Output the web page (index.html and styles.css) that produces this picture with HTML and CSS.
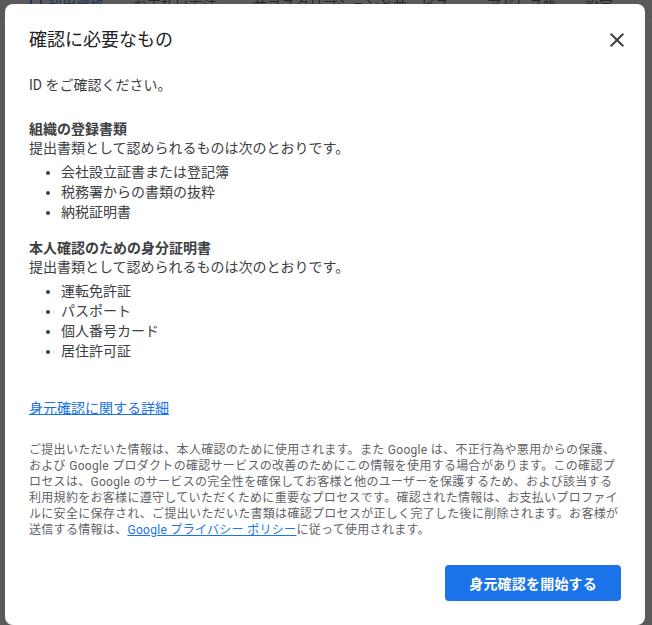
FILE: index.html
```html
<!DOCTYPE html>
<html lang="ja">
<head>
<meta charset="utf-8">
<link rel="stylesheet" href="styles.css">
</head>
<body>
<div class="page">
  <nav class="tabs">
    <span class="tab tab-active"><span class="tab-icon"></span>利用資格</span>
    <span class="tab tab-2">お支払い方法</span>
    <span class="tab tab-3">サブスクリプションとサービス</span>
    <span class="tab tab-4">アドレス帳</span>
    <span class="tab tab-5">設定</span>
  </nav>
</div>
<div class="overlay">
  <div class="dialog" role="dialog">
    <div class="dialog-header">
      <h1 class="dialog-title">確認に必要なもの</h1>
      <button class="close" aria-label="閉じる">
        <svg width="24" height="24" viewBox="0 0 24 24"><path d="M19 6.41L17.59 5 12 10.59 6.41 5 5 6.41 10.59 12 5 17.59 6.41 19 12 13.41 17.59 19 19 17.59 13.41 12z" fill="#3c4043"/></svg>
      </button>
    </div>
    <p class="intro">ID をご確認ください。</p>
    <section class="section first">
      <h2 class="section-title">組織の登録書類</h2>
      <p class="section-desc">提出書類として認められるものは次のとおりです。</p>
      <ul class="doc-list">
        <li>会社設立証書または登記簿</li>
        <li>税務署からの書類の抜粋</li>
        <li>納税証明書</li>
      </ul>
    </section>
    <section class="section">
      <h2 class="section-title">本人確認のための身分証明書</h2>
      <p class="section-desc">提出書類として認められるものは次のとおりです。</p>
      <ul class="doc-list">
        <li>運転免許証</li>
        <li>パスポート</li>
        <li>個人番号カード</li>
        <li>居住許可証</li>
      </ul>
    </section>
    <a class="details-link" href="#">身元確認に関する詳細</a>
    <p class="fine-print">ご提出いただいた情報は、本人確認のために使用されます。また Google は、不正行為や悪用からの保護、および Google プロダクトの確認サービスの改善のためにこの情報を使用する場合があります。この確認プロセスは、Google のサービスの完全性を確保してお客様と他のユーザーを保護するため、および該当する利用規約をお客様に遵守していただくために重要なプロセスです。確認された情報は、お支払いプロファイルに安全に保存され、ご提出いただいた書類は確認プロセスが正しく完了した後に削除されます。お客様が送信する情報は、<a class="inline-link" href="#">Google プライバシー ポリシー</a>に従って使用されます。</p>
    <div class="actions">
      <button class="primary">身元確認を開始する</button>
    </div>
  </div>
</div>
</body>
</html>
```
FILE: styles.css
```css
* { box-sizing: border-box; }
html, body {
  margin: 0;
  padding: 0;
  height: 100%;
  overflow: hidden;
}
body {
  font-family: Roboto, "Noto Sans CJK JP", sans-serif;
  background: #fff;
  color: #3c4043;
}
.page {
  height: 100%;
}
.tabs {
  display: flex;
  padding-left: 30px;
  margin-top: -10px;
  height: 28px;
  align-items: center;
  border-bottom: 1px solid #dadce0;
  font-size: 14px;
  color: #3c4043;
}
.tab { display: inline-flex; align-items: center; gap: 6px; }
.tab-active { color: #1a73e8; }
.tab-2 { margin-left: 29px; }
.tab-3 { margin-left: 36px; }
.tab-4 { margin-left: 38px; }
.tab-5 { margin-left: 28px; }
.tab-icon {
  width: 12px; height: 12px;
  border: 2px solid #1a73e8;
  border-radius: 2px;
}
.overlay {
  position: fixed;
  inset: 0;
  background: rgba(32, 33, 36, 0.74);
}
.dialog {
  position: absolute;
  left: 5px;
  top: 4px;
  width: 640px;
  height: 621px;
  background: #fff;
  border-radius: 8px;
  padding: 24px;
  display: flex;
  flex-direction: column;
}
.dialog-header {
  display: flex;
  justify-content: space-between;
  align-items: center;
  margin-right: -8px;
}
.dialog-title {
  margin: 0;
  font-size: 18px;
  line-height: 24px;
  font-weight: 400;
  color: #202124;
}
.close {
  width: 24px;
  height: 24px;
  padding: 0;
  border: 0;
  background: none;
  display: flex;
}
.intro {
  margin: 23px 0 0;
  font-size: 14px;
  line-height: 20px;
}
.section { margin-top: 16px; }
.section.first { margin-top: 24px; }
.section-title {
  margin: 0;
  font-size: 14px;
  line-height: 20px;
  font-weight: 700;
  color: #3c4043;
}
.section-desc {
  margin: 0;
  font-size: 14px;
  line-height: 19px;
}
.doc-list {
  margin: 4px 0 0;
  padding-left: 32px;
  font-size: 14px;
  line-height: 20px;
  list-style: disc;
}
.details-link {
  margin-top: 37px;
  align-self: flex-start;
  font-size: 14px;
  line-height: 20px;
  color: #1a73e8;
  text-decoration: underline;
}
.fine-print {
  margin: 24px 0 0;
  font-size: 12px;
  line-height: 16px;
  letter-spacing: 0.3px;
  color: #5f6368;
}
.inline-link {
  color: #1a73e8;
  text-decoration: underline;
}
.actions {
  margin-top: auto;
  display: flex;
  justify-content: flex-end;
}
.primary {
  height: 36px;
  padding: 0 24px;
  border: 0;
  border-radius: 4px;
  background: #1a73e8;
  color: #fff;
  font-family: Roboto, "Noto Sans CJK JP", sans-serif;
  font-size: 14px;
  font-weight: 700;
  letter-spacing: 0.2px;
}
```
